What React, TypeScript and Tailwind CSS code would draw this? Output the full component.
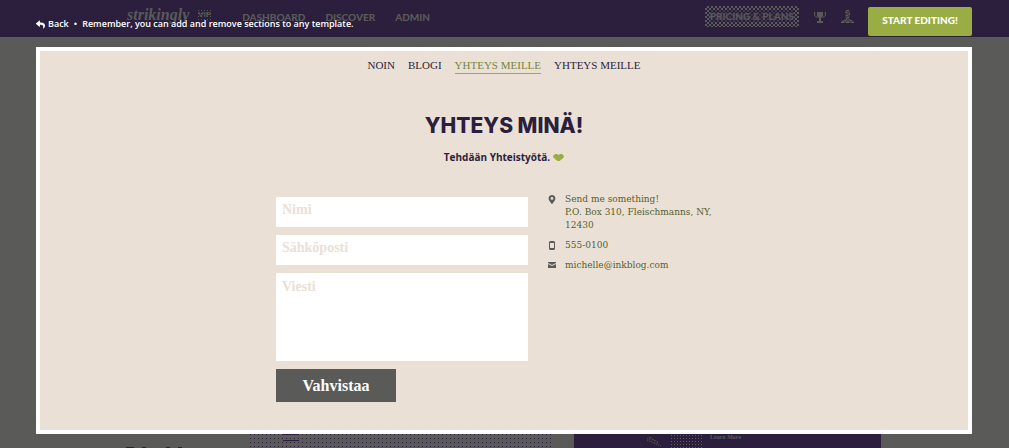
import { FaReply, FaMapMarkerAlt } from "react-icons/fa"

const navLinks = [
  { label: "NOIN", active: false },
  { label: "BLOGI", active: false },
  { label: "YHTEYS MEILLE", active: true },
  { label: "YHTEYS MEILLE", active: false },
]

function TrophyIcon() {
  return (
    <svg viewBox="0 0 12 12" className="h-3 w-3" fill="currentColor" aria-hidden="true">
      <path d="M3 1h6v4L7 7v3h2v2H3v-2h2V7L3 5z" />
      <path d="M1.5 1.5h-1v3l3 2M10.5 1.5h1v3l-3 2" fill="none" stroke="currentColor" />
    </svg>
  )
}

function StampIcon() {
  return (
    <svg viewBox="0 0 13 13" className="h-[13px] w-[13px]" fill="currentColor" aria-hidden="true">
      <path d="M5 0h3l1 2-1 2 1 2-1 3 5 2v2H0v-2l5-2-1-3 1-2-1-2z" fillOpacity="0.5" />
      <path d="M5 0h3v1H5zM4 2h2v1H4zM8 3h1v2H8zM5 5h2v1H5zM6 7h2v1H6zM5 8h1v2H5zM8 9h1v1H8zM3 10h2v1H3zM9 10h2v1H9zM1 11h2v1H1zM6 11h2v1H6zM0 12h3v1H0zM5 12h3v1H5zM10 12h3v1h-3z" />
    </svg>
  )
}

function HeartIcon() {
  return (
    <svg viewBox="0 0 11 7" className="h-[7px] w-[11px]" fill="#9aad45" aria-hidden="true">
      <path d="M2 0h2l1.5 1L7 0h2l2 2v1L9 5 6.5 7h-2L2 5 0 3V2z" />
    </svg>
  )
}

function PhoneIcon() {
  return (
    <svg viewBox="0 0 8 9" className="mt-0.5 h-[9px] w-2 shrink-0" fill="#5a5a58" aria-hidden="true">
      <path fillRule="evenodd" d="M2 0h4l1 1v7L6 9H2L1 8V1zM2 2v5h4V2z" />
    </svg>
  )
}

function MailIcon() {
  return (
    <svg viewBox="0 0 8 6" className="mt-[3px] h-1.5 w-2 shrink-0" fill="#5a5a58" aria-hidden="true">
      <path d="M0 0h8v1L4 3 0 1zM0 2l4 2 4-2v4H0z" />
    </svg>
  )
}

// Template gallery that stays dimmed behind the preview
function Gallery() {
  return (
    <div className="flex min-h-screen flex-col text-[#5a5a58]">
      <header className="flex h-[37px] items-center bg-[#2b1f3d] pr-[155px] pl-[127px] font-['Lato',sans-serif] text-[10px] font-black">
        <div className="flex items-center gap-2 pb-2">
          <span className="font-['Liberation_Serif',serif] text-base leading-4 font-bold italic">strikingly</span>
          <span className="bg-[radial-gradient(#5a5a58_25%,transparent_30%)] bg-size-[3px_3px] px-px font-['Liberation_Sans',sans-serif] text-[8px] leading-3">VIP</span>
        </div>
        <nav className="ml-[30px] flex gap-5 pb-0.5">
          <a href="#dashboard">DASHBOARD</a>
          <a href="#discover">DISCOVER</a>
          <a href="#admin">ADMIN</a>
        </nav>
        <div className="ml-auto flex items-center gap-[15px] pb-1">
          <a href="#pricing" className="bg-[conic-gradient(#5a5a58_25%,transparent_25%_50%,#5a5a58_50%_75%,transparent_75%)] bg-size-[4px_4px] p-[5px] leading-[11px]">
            <span className="bg-[#2b1f3d]/60">PRICING &amp; PLANS</span>
          </a>
          <TrophyIcon />
          <StampIcon />
        </div>
      </header>

      <div className="mt-auto flex h-3.5 items-end gap-5 overflow-hidden pr-32 pl-[126px]">
        <span className="h-px w-[101px] shrink-0 overflow-hidden">
          <span className="flex gap-2">
            <i className="h-px w-2 bg-[#2b1f3d]" />
            <i className="h-px w-1 bg-[#2b1f3d]" />
            <i className="ml-3 h-px w-1 bg-[#2b1f3d]" />
            <i className="h-px w-1 bg-[#2b1f3d]" />
          </span>
        </span>
        <span className="flex h-3.5 min-w-0 flex-1 flex-col items-start bg-[linear-gradient(90deg,#5a5a58_3px,transparent_3px),linear-gradient(#2b1f3d_1px,transparent_1px)] bg-size-[4px_4px]">
          <i className="ml-9 h-px w-4 bg-[#2b1f3d]" />
          <i className="mt-[5px] ml-9 h-px w-4 bg-[#2b1f3d]" />
        </span>
        <span className="flex h-3.5 min-w-0 flex-1 items-start gap-2 bg-[#2b1f3d]">
          <svg viewBox="0 0 16 12" className="mt-0.5 ml-[72px] h-3 w-4" fill="none" stroke="currentColor" strokeDasharray="1 1" aria-hidden="true">
            <path d="M1 3l3-2M1 4l14 6M4 2l8 4M4 1L3 5M7 3L5 6M9 4L8 8M12 6l-2 3" />
          </svg>
          <i className="h-3.5 w-8 bg-[radial-gradient(#5a5a58_30%,transparent_35%)] bg-size-[3px_3px]" />
          <span className="font-['Liberation_Serif',serif] text-[6px] leading-[6px] font-bold">Learn More</span>
        </span>
      </div>
    </div>
  )
}

function ContactForm() {
  const field = "block w-full bg-white px-1.5 font-bold placeholder:text-[#eae0d5] placeholder:opacity-100"

  return (
    <form className="flex flex-1 flex-col items-start gap-2 pt-1 text-sm" onSubmit={(e) => e.preventDefault()}>
      <input type="text" aria-label="Nimi" placeholder="Nimi" className={`${field} h-[30px] pb-1`} />
      <input type="email" aria-label="Sähköposti" placeholder="Sähköposti" className={`${field} h-[30px] pb-1`} />
      <textarea aria-label="Viesti" placeholder="Viesti" className={`${field} h-[88px] resize-none pt-1`} />
      <button type="submit" className="h-[33px] w-[120px] bg-[#5a5a58] text-base font-bold text-white">
        Vahvistaa
      </button>
    </form>
  )
}

function ContactInfo() {
  return (
    <ul className="w-[184px] space-y-[7px] font-['DejaVu_Serif',serif] text-[9px] leading-[13px] text-[#55602f]">
      <li className="flex gap-[9px]">
        <FaMapMarkerAlt className="mt-0.5 w-2 shrink-0 text-[#5a5a58]" size={9} />
        <address className="not-italic">
          Send me something!
          <br />
          P.O. Box 310, Fleischmanns, NY, 12430
        </address>
      </li>
      <li className="flex gap-[9px]">
        <PhoneIcon />
        <a href="tel:5550100">555-0100</a>
      </li>
      <li className="flex gap-[9px]">
        <MailIcon />
        <a href="mailto:michelle@inkblog.com">michelle@inkblog.com</a>
      </li>
    </ul>
  )
}

export default function App() {
  return (
    <div className="relative min-h-screen overflow-hidden bg-[#5a5a58]">
      <Gallery />

      <div className="absolute inset-0 flex flex-col pr-[37px] pb-3.5 pl-9">
        <div className="flex h-[47px] shrink-0 items-start justify-between">
          <p className="flex items-center gap-[5px] pt-[17px] font-['Open_Sans',sans-serif] text-[9px] leading-[14px] font-semibold text-white">
            <a href="#back" className="flex items-center gap-[3px]">
              <FaReply size={9} />
              Back
            </a>
            <span>•</span>
            <span>Remember, you can add and remove sections to any template.</span>
          </p>
          <button type="button" className="mt-[7px] h-[29px] w-[104px] rounded-xs bg-[#9aad45] pb-0.5 font-['Lato',sans-serif] text-[10px] font-black text-white">
            START EDITING!
          </button>
        </div>

        <main className="flex-1 border-4 border-white bg-[#eae0d5] font-['Liberation_Serif',serif] text-[#2b1f3d]">
          <nav className="flex justify-center gap-[13px] pt-[7px] text-[11px] leading-[15px]">
            {navLinks.map((link, i) => (
              <a key={i} href="#section" className={link.active ? "border-b border-[#9aad45] text-[#76843f]" : "border-b border-transparent"}>
                {link.label}
              </a>
            ))}
          </nav>

          <h1 className="mt-9 text-center font-['Inter',sans-serif] text-[21px] leading-8 font-extrabold">YHTEYS MINÄ!</h1>
          <p className="mt-[7px] flex items-center justify-center gap-[3px] font-['Open_Sans',sans-serif] text-[10px] leading-4 font-bold">
            Tehdään Yhteistyötä.
            <HeartIcon />
          </p>

          <div className="mx-auto mt-7 flex w-full max-w-[456px] gap-5">
            <ContactForm />
            <ContactInfo />
          </div>
        </main>
      </div>
    </div>
  )
}
